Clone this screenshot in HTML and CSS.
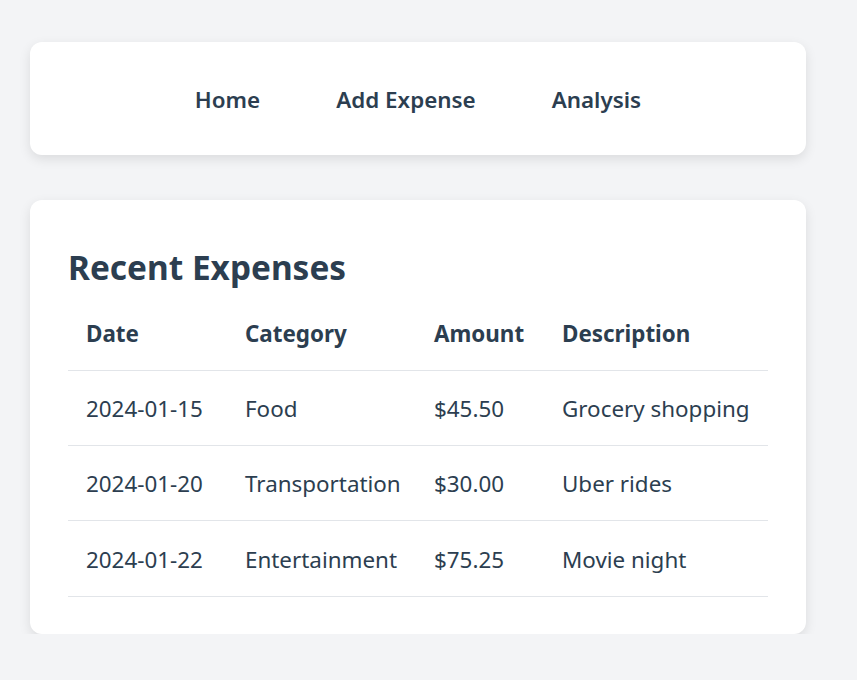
FILE: index.html
```html
<!DOCTYPE html>
<html lang="en">
<head>
<meta charset="utf-8">
<title>Expenses</title>
<link rel="stylesheet" href="styles.css">
</head>
<body>
<div class="container">
  <nav class="nav card">
    <a href="#" class="nav-link">Home</a>
    <a href="#" class="nav-link">Add Expense</a>
    <a href="#" class="nav-link">Analysis</a>
  </nav>
  <section class="card expenses">
    <h2 class="title">Recent Expenses</h2>
    <table class="table">
      <colgroup>
        <col class="c1"><col class="c2"><col class="c3"><col class="c4">
      </colgroup>
      <thead>
        <tr><th>Date</th><th>Category</th><th>Amount</th><th>Description</th></tr>
      </thead>
      <tbody>
        <tr><td>2024-01-15</td><td>Food</td><td>$45.50</td><td>Grocery shopping</td></tr>
        <tr><td>2024-01-20</td><td>Transportation</td><td>$30.00</td><td>Uber rides</td></tr>
        <tr class="last"><td>2024-01-22</td><td>Entertainment</td><td>$75.25</td><td>Movie night</td></tr>
      </tbody>
    </table>
  </section>
</div>
</body>
</html>
```
FILE: styles.css
```css
* { box-sizing: border-box; }
html, body { margin: 0; padding: 0; }
body {
  background: #f3f4f6;
  font-family: "Noto Sans", "Open Sans", sans-serif;
  color: #2c3e50;
}
.container {
  width: 776px;
  margin-left: 30px;
  padding-top: 42px;
  display: flex;
  flex-direction: column;
  gap: 45px;
}
.card {
  background: #fff;
  border-radius: 12px;
  box-shadow: 0 4px 12px rgba(0,0,0,0.1);
}
.nav {
  height: 113px;
  display: flex;
  justify-content: center;
  align-items: center;
  gap: 76px;
  padding-top: 2px;
}
.nav-link {
  color: #2c3e50;
  text-decoration: none;
  font-weight: 600;
  font-size: 22.4px;
}
.expenses {
  padding: 38px 38px 37px;
}
.title {
  margin: 0;
  padding-top: 2px;
  font-size: 33.4px;
  font-weight: 700;
  line-height: 55px;
}
.table {
  width: 700px;
  border-collapse: collapse;
  table-layout: fixed;
  font-size: 22.4px;
}
.c1 { width: 159px; }
.c2 { width: 189px; }
.c3 { width: 128px; }
.c4 { width: 224px; }
.table th, .table td {
  text-align: left;
  padding: 2px 18px 0;
  height: 75px;
  white-space: nowrap;
  border-bottom: 1px solid #e2e5e9;
}
.table .last td { height: 76px; }
.table th { font-weight: 700; }
.table td { font-weight: 400; }
```
